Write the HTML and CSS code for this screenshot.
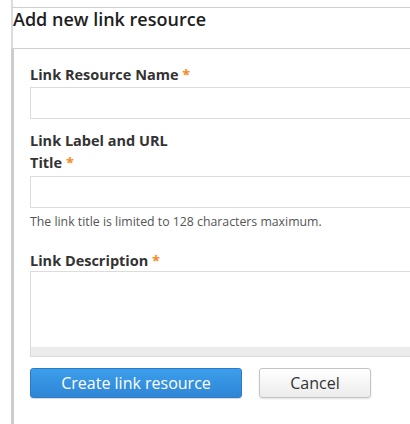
FILE: index.html
```html
<!DOCTYPE html>
<html>
<head>
<meta charset="utf-8">
<link rel="stylesheet" href="styles.css">
</head>
<body>
<div class="page">
  <div class="top"></div>
  <div class="header"><h1 class="title">Add new link resource</h1></div>
  <div class="content">
    <div class="field">
      <label class="label">Link Resource Name <span class="req">*</span></label>
      <div class="input"></div>
    </div>
    <div class="field">
      <div class="label">Link Label and URL</div>
      <label class="label">Title <span class="req">*</span></label>
      <div class="input"></div>
      <div class="help">The link title is limited to 128 characters maximum.</div>
    </div>
    <div class="field field-desc">
      <label class="label">Link Description <span class="req">*</span></label>
      <div class="textarea"><div class="textarea-bar"></div></div>
    </div>
    <div class="actions">
      <button class="btn btn-primary">Create link resource</button>
      <button class="btn btn-default">Cancel</button>
    </div>
  </div>
</div>
</body>
</html>
```
FILE: styles.css
```css
html, body {
  margin: 0;
  padding: 0;
  background: #fff;
  overflow: hidden;
}
body {
  font-family: "Open Sans", "DejaVu Sans", sans-serif;
  color: #333;
  width: 410px;
  height: 424px;
}
.page {
  margin-left: 11px;
  width: 399px;
  display: flex;
  flex-direction: column;
  height: 424px;
  overflow: hidden;
}
.top {
  height: 7px;
  border-left: 2px solid #dcdcdc;
}
.header {
  border-top: 1px solid #cfcfcf;
  border-bottom: 1px solid #cfcfcf;
  border-left: 2px solid #dcdcdc;
  height: 40px;
}
.title {
  margin: 0;
  padding-top: 1px;
  font-size: 18px;
  font-weight: 600;
  line-height: 21px;
  color: #1e1e1e;
  white-space: nowrap;
}
.content {
  flex: 1;
  border-left: 3px solid #cdcdcd;
  padding: 16px 0 0 16px;
}
.field {
  margin-bottom: 12px;
}
.label {
  display: block;
  font-size: 14.5px;
  font-weight: 700;
  line-height: 20px;
  color: #333;
  margin-bottom: 2px;
  white-space: nowrap;
}
.req {
  color: #f7891e;
}
.input {
  width: 400px;
  height: 30px;
  border: 1px solid #dcdcdc;
  background: #fff;
  margin-top: 3px;
}
.field:first-child .input {
  margin-top: 0;
}
.help {
  font-size: 12.3px;
  line-height: 16px;
  color: #555;
  margin-top: 6px;
  white-space: nowrap;
}
.field-desc {
  margin-top: 21px;
  margin-bottom: 11px;
}
.field-desc .label {
  margin-bottom: 0;
}
.textarea {
  width: 400px;
  height: 84px;
  border: 1px solid #dcdcdc;
  display: flex;
  flex-direction: column;
  justify-content: flex-end;
}
.textarea-bar {
  height: 9px;
  background: #ececec;
}
.actions {
  display: flex;
  gap: 17px;
}
.btn {
  font-family: "Open Sans", "DejaVu Sans", sans-serif;
  font-size: 16px;
  height: 30px;
  border-radius: 3px;
  padding: 0;
  line-height: 28px;
  cursor: pointer;
}
.btn-primary {
  width: 212px;
  color: #fff;
  border: 1px solid #2a7cc8;
  background: linear-gradient(#3c9eec, #2e86d5);
  box-shadow: 0 1px 1px rgba(0, 0, 0, 0.15);
}
.btn-default {
  width: 112px;
  color: #333;
  border: 1px solid #c4c4c4;
  background: linear-gradient(#ffffff, #ececec);
  box-shadow: 0 1px 2px rgba(0, 0, 0, 0.12);
}
```
